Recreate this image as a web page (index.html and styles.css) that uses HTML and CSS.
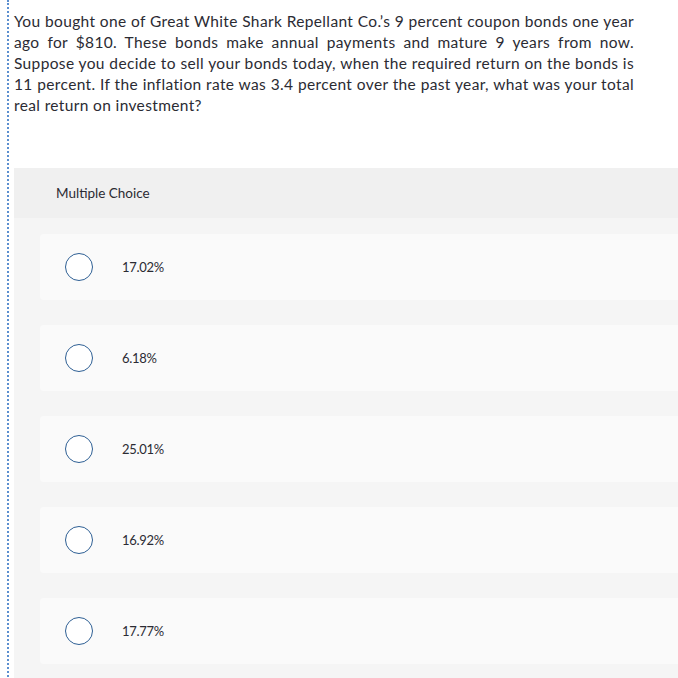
FILE: index.html
```html
<!DOCTYPE html>
<html>
<head>
<meta charset="utf-8">
<link rel="stylesheet" href="styles.css">
</head>
<body>
<div class="frame">
  <p class="question">You bought one of Great White Shark Repellant Co.’s 9 percent coupon bonds one year ago for $810. These bonds make annual payments and mature 9 years from now. Suppose you decide to sell your bonds today, when the required return on the bonds is 11 percent. If the inflation rate was 3.4 percent over the past year, what was your total real return on investment?</p>
  <div class="panel">
    <div class="panel-head">Multiple Choice</div>
    <div class="options">
      <div class="option"><span class="radio"></span><span class="label">17.02%</span></div>
      <div class="option"><span class="radio"></span><span class="label">6.18%</span></div>
      <div class="option"><span class="radio"></span><span class="label">25.01%</span></div>
      <div class="option"><span class="radio"></span><span class="label">16.92%</span></div>
      <div class="option"><span class="radio"></span><span class="label">17.77%</span></div>
    </div>
  </div>
</div>
</body>
</html>
```
FILE: styles.css
```css
html, body {
  margin: 0;
  padding: 0;
  background: #ffffff;
}
body {
  font-family: "Lato", "Open Sans", sans-serif;
  color: #2b2b33;
  overflow: hidden;
}
.frame {
  margin-left: 7px;
  border-left: 2px dotted #5b8fd0;
  padding-left: 5px;
  min-height: 678px;
}
.question {
  margin: 0;
  padding: 11px 0 0 0;
  width: 620px;
  font-size: 15.5px;
  letter-spacing: 0.36px;
  line-height: 21px;
  text-align: justify;
}
.panel {
  margin-top: 52px;
  background: #f5f5f5;
}
.panel-head {
  height: 50px;
  background: #f0f0f0;
  display: flex;
  align-items: center;
  padding-left: 42px;
  font-size: 13.5px;
}
.options {
  padding: 16px 0 16px 26px;
  display: flex;
  flex-direction: column;
  gap: 25px;
}
.option {
  height: 66px;
  background: #fafafa;
  border-radius: 4px 0 0 4px;
  display: flex;
  align-items: center;
  padding-left: 25px;
}
.radio {
  width: 26px;
  height: 26px;
  border: 1.5px solid #2e5f94;
  border-radius: 50%;
  background: #ffffff;
  flex: none;
}
.label {
  margin-left: 29px;
  font-size: 13px;
  letter-spacing: -0.3px;
}
```
